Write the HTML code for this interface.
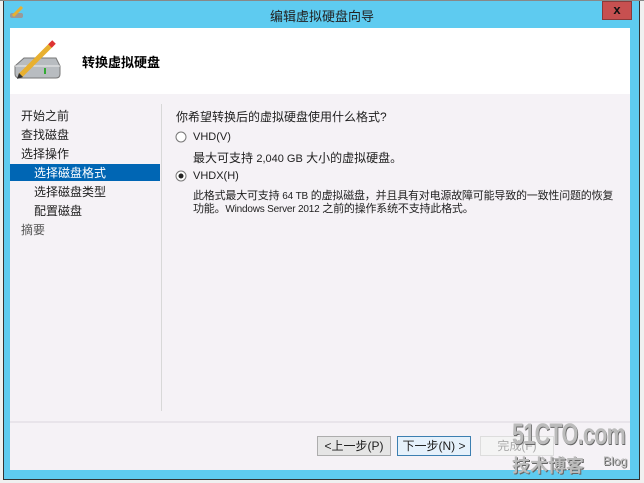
<!DOCTYPE html>
<html><head><meta charset="utf-8"><style>
*{margin:0;padding:0;box-sizing:border-box}
body{width:644px;height:483px;background:#f0f0f0;position:relative;overflow:hidden;font-family:"Liberation Sans","Noto Sans CJK SC",sans-serif;font-size:12px;color:#1e1e1e}
.a{position:absolute}
.win{left:3px;top:0;width:637px;height:480px;background:#5ecbf0;border:1px solid #333;border-top:none}
.cl{left:602px;top:1px;width:30px;height:19px;background:#c75050;border:1px solid #8a3a3a;color:#111;font-weight:bold;text-align:center;line-height:16px;font-size:13px}
.hdr{left:10px;top:28px;width:620px;height:66px;background:#fff}
.body{left:10px;top:94px;width:620px;height:376px;background:#f5f2f6}
.btn{height:20px;top:436px;border:1px solid #adadad;background:#e5e5e5;text-align:center;line-height:18px;font-size:12px}
.lat{font-size:11px}
</style></head><body>
<div class="a win"></div>
<div class="a" style="left:0;top:0;width:644px;height:1px;background:#888"></div>
<div class="a" style="left:0;width:644px;top:6px;text-align:center;font-size:13px;color:#222">编辑虚拟硬盘向导</div>
<svg class="a" style="left:9px;top:6px" width="16" height="14"><rect x="1" y="7" width="13" height="5" rx="2" fill="#999"/><line x1="4" y1="10" x2="13" y2="1" stroke="#e8b030" stroke-width="3"/></svg>
<div class="a cl">x</div>
<div class="a hdr"></div>
<svg class="a" style="left:12px;top:38px" width="50" height="44">
<path d="M3 28 L12 20 L44 20 L48 28 L48 36 Q48 40 44 40 L8 40 Q3 40 3 36Z" fill="#b8bcc0" stroke="#777"/>
<path d="M3 28 L48 28" stroke="#eee"/>
<rect x="32" y="30" width="2" height="6" fill="#3a3"/>
<line x1="8" y1="38" x2="40" y2="6" stroke="#e8b030" stroke-width="5"/>
<line x1="38" y1="8" x2="42" y2="4" stroke="#d33" stroke-width="5"/>
<path d="M5 41 L7 35 L11 39Z" fill="#333"/>
</svg>
<div class="a" style="left:82px;top:52px;font-size:13px;font-weight:bold;color:#000">转换虚拟硬盘</div>
<div class="a body"></div>
<div class="a" style="left:161px;top:104px;width:1px;height:307px;background:#d8d8d8"></div>
<div class="a" style="left:10px;top:421px;width:620px;height:2px;background:#e8e4ea"></div>
<div class="a" style="left:10px;top:164px;width:150px;height:17px;background:#0066b4"></div>
<div class="a" style="left:21px;top:107px;line-height:19px">开始之前<br>查找磁盘<br>选择操作<br><span style="color:#fff;margin-left:13px">选择磁盘格式</span><br><span style="margin-left:13px">选择磁盘类型</span><br><span style="margin-left:13px">配置磁盘</span><br><span style="color:#555">摘要</span></div>
<div class="a" style="left:176px;top:108px">你希望转换后的虚拟硬盘使用什么格式?</div>
<svg class="a" style="left:175px;top:131px" width="14" height="60"><circle cx="6" cy="6" r="5" fill="#fff" stroke="#777"/><circle cx="6" cy="45" r="5" fill="#fff" stroke="#777"/><circle cx="6" cy="45" r="2.5" fill="#222"/></svg>
<div class="a lat" style="left:193px;top:131px">VHD(V)</div>
<div class="a" style="left:193px;top:149px">最大可支持 <span class="lat">2,040 GB</span> 大小的虚拟硬盘。</div>
<div class="a lat" style="left:193px;top:170px">VHDX(H)</div>
<div class="a" style="left:193px;top:190px;line-height:13px;white-space:nowrap;font-size:11px;letter-spacing:-0.2px">此格式最大可支持 <span style="font-size:10px">64 TB</span> 的虚拟磁盘，并且具有对电源故障可能导致的一致性问题的恢复<br>功能。<span style="font-size:10px">Windows Server 2012</span> 之前的操作系统不支持此格式。</div>
<div class="a btn" style="left:317px;width:74px">&lt;上一步(P)</div>
<div class="a btn" style="left:397px;width:74px;border-color:#3c7fb1;background:#e5f1fb">下一步(N) &gt;</div>
<div class="a btn" style="left:480px;width:74px;color:#aaa;background:#f4f4f4;border-color:#ddd">完成(F)</div>
<div class="a" style="left:512px;top:418px;font-size:30px;font-weight:bold;color:#bbb;letter-spacing:-1px;text-shadow:1px 1px #666;transform:scaleX(0.72);transform-origin:0 0">51CTO.com</div>
<div class="a" style="left:512px;top:452px;font-size:18px;font-weight:bold;color:#bbb;text-shadow:1px 1px #666">技术博客</div>
<div class="a" style="left:603px;top:454px;font-size:12px;color:#bbb;text-shadow:1px 1px #666">Blog</div>
</body></html>
